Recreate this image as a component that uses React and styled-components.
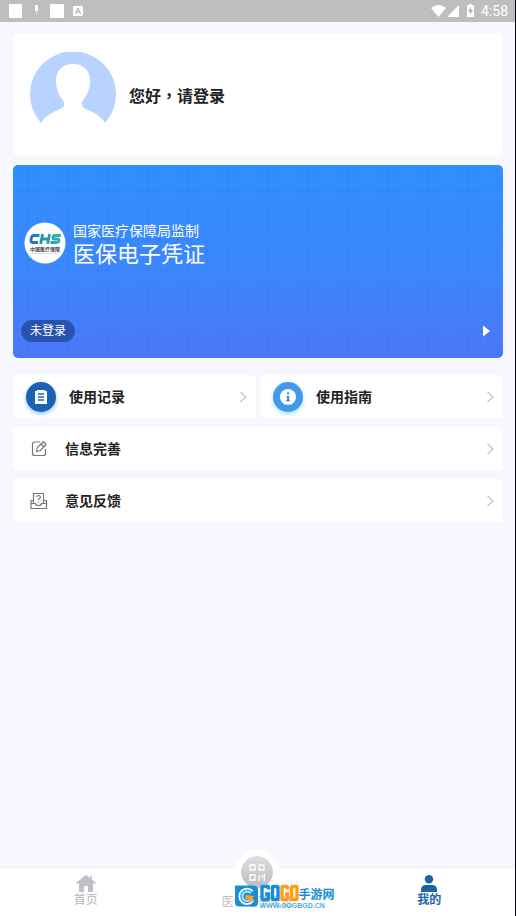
import React from "react";
import styled, { createGlobalStyle } from "styled-components";

const GlobalStyle = createGlobalStyle`
  *, *::before, *::after { box-sizing: border-box; }
  body {
    margin: 0;
    background: #f6f7ff;
    color: #222;
    font-family: Roboto, "Noto Sans CJK SC", sans-serif;
  }
  button { font: inherit; color: inherit; border: 0; padding: 0; background: none; cursor: pointer; }
  svg { display: block; flex: none; }
`;

const Screen = styled.div`
  display: flex;
  flex-direction: column;
  min-height: 100vh;
  border-right: 1px solid #05070c;
`;

const StatusBar = styled.header`
  display: flex;
  align-items: center;
  justify-content: space-between;
  height: 22px;
  padding: 0 7px 0 8px;
  background: #bebebe;
  color: #fff;
`;

const StatusGroup = styled.div`
  display: flex;
  align-items: center;
  gap: 5px;
`;

const Clock = styled.time`
  font-size: 14px;
  line-height: 20px;
`;

const Content = styled.main`
  flex: 1;
  display: flex;
  flex-direction: column;
  gap: 9px;
  padding: 12px 12px 24px 13px;
`;

const Profile = styled.section`
  display: flex;
  align-items: flex-start;
  gap: 13px;
  height: 122px;
  padding: 18px 17px;
  border-radius: 5px;
  background: #fff;
`;

const Greeting = styled.h1`
  margin: 0;
  font-size: 16px;
  line-height: 86px;
  font-weight: 700;
`;

const Comma = styled.span`
  font-family: "Noto Sans CJK TC", sans-serif;
`;

const InsuranceCard = styled.section`
  display: flex;
  flex-direction: column;
  justify-content: space-between;
  height: 193px;
  margin-bottom: 8px;
  padding: 54px 12px 16px 8px;
  border-radius: 5px;
  color: #fff;
  background:
    radial-gradient(circle, rgba(30, 90, 225, 0.3) 0, transparent 2px) 0 0 / 10px 10px,
    linear-gradient(#318fff, #3b87fd 50%, #4b78f8);
`;

const CardBrand = styled.div`
  display: flex;
  align-items: center;
  gap: 7px;
  padding-left: 3px;
`;

const Issuer = styled.p`
  margin: 0;
  font-size: 14px;
  line-height: 24px;
`;

const CardTitle = styled.h2`
  margin: 0;
  font-size: 22px;
  line-height: 24px;
  font-weight: 400;
`;

const CardFooter = styled.div`
  display: flex;
  align-items: center;
  justify-content: space-between;
`;

const StatusPill = styled.span`
  padding: 0 9px;
  border-radius: 11px;
  background: #2a53ad;
  font-size: 12px;
  line-height: 22px;
`;

const Shortcuts = styled.div`
  display: grid;
  grid-template-columns: 1fr 1fr;
  gap: 4px;
`;

const MenuButton = styled.button`
  display: flex;
  align-items: center;
  gap: ${(p) => (p.$wide ? 16 : 13)}px;
  width: 100%;
  height: 43px;
  padding: 0 8px 0 ${(p) => (p.$wide ? 16 : 13)}px;
  border-radius: 4px;
  background: #fff;
  text-align: left;
`;

const MenuLabel = styled.span`
  flex: 1;
  font-size: 14px;
  line-height: 20px;
  font-weight: 700;
`;

const RoundIcon = styled.span`
  display: grid;
  place-items: center;
  width: 30px;
  height: 30px;
  border-radius: 50%;
  background: ${(p) => p.$color};
  box-shadow: 0 2px 4px ${(p) => p.$glow};
`;

const TabBar = styled.nav`
  position: relative;
  display: grid;
  grid-template-columns: repeat(3, 1fr);
  height: 49px;
  border-top: 1px solid #f0f1f6;
  background: #fff;
`;

const Tab = styled.button`
  display: flex;
  flex-direction: column;
  align-items: center;
  justify-content: flex-end;
  padding-bottom: 8px;
  color: ${(p) => (p.$active ? "#1d62af" : "#bfc0c8")};
  font-size: 12px;
  line-height: 16px;
  font-weight: ${(p) => (p.$active ? 700 : 500)};
`;

const ScanTab = styled(Tab)`
  padding-bottom: 6px;
  font-weight: 400;
`;

const ScanCircle = styled.span`
  display: grid;
  place-items: center;
  width: 44px;
  height: 44px;
  margin-top: -24px;
  border: 6px solid #fff;
  border-radius: 50%;
  background: linear-gradient(#dedee0, #bdbdc0) padding-box, #fff border-box;
`;

const Watermark = styled.div`
  position: absolute;
  left: 50%;
  bottom: 7px;
  display: flex;
  align-items: center;
  gap: 2px;
  margin-left: -23px;
  pointer-events: none;
`;

const SiteName = styled.div`
  display: flex;
  align-items: center;
  height: 20px;
  color: #168ed8;
  font-family: "Liberation Sans", "Noto Sans CJK SC", sans-serif;
  font-size: 12px;
  font-weight: 700;
`;

const SiteUrl = styled.div`
  color: #4daee4;
  font-family: "Liberation Sans", sans-serif;
  font-size: 7px;
  line-height: 6px;
  font-weight: 700;
`;

const Brand = styled.svg`
  font-family: "Liberation Sans", "Noto Sans CJK SC", sans-serif;
  font-weight: 500;
`;

function NotificationIcons() {
  return (
    <svg width="76" height="18" viewBox="0 0 76 18" fill="#fff" aria-hidden="true">
      <path d="M1 2h13v14H1zM42 2h14v14H42zM27 3h3v6h-3z" />
      <path d="M28 9h1v3h-1z" opacity=".6" />
      <rect x="65" y="4" width="10" height="10" rx="1" />
      <path d="m67.5 12 2.5-6 2.5 6m-4-2h3" fill="none" stroke="#aaa" strokeWidth="1" />
    </svg>
  );
}

function SignalIcons() {
  return (
    <svg width="45" height="18" viewBox="0 0 45 18" fill="#fff" aria-hidden="true">
      <path d="M0 6Q7.500 0 15 6L7.500 15zM28 3v12H16z" />
      <path d="M36 3h2V2h3v1h2v12h-7z" />
      <path d="m40 5-3 4.500h2.500L39 13l3-5h-2z" fill="#aaa" />
    </svg>
  );
}

function Avatar() {
  return (
    <svg width="86" height="86" viewBox="0 0 86 86" role="img" aria-label="头像">
      <path
        fill="#b8d3ff"
        d="M11 71A43 43 0 1 1 75 71C71 64 63 60 56 57C51 55 51 51 54 47C58 42 60 36 60 29C60 18 53 12 43 12S26 18 26 29C26 36 28 42 32 47C36 52 35 55 30 57C23 60 15 64 11 71Z"
      />
    </svg>
  );
}

function ChsLogo() {
  return (
    <Brand width="42" height="42" viewBox="0 0 42 42" role="img" aria-label="CHS 中国医疗保障">
      <defs>
        <linearGradient id="chs" gradientUnits="userSpaceOnUse" x1="5" y1="0" x2="37" y2="0">
          <stop stopColor="#1b75a9" />
          <stop offset="1" stopColor="#31b6b3" />
        </linearGradient>
      </defs>
      <circle cx="21" cy="21" r="20.5" fill="#fff" />
      <g fill="none" stroke="url(#chs)" strokeWidth="2.800">
        <path d="M15.500 13.500H9.500Q8 13.500 7.600 15L7 18.500Q6.800 20.500 8.500 20.500H14" />
        <path d="M18.600 12 16.600 22M25.600 12 23.600 22M17.500 17h7" />
        <path d="M37 13.500h-6q-1.700 0-2 1.700t1.500 1.800h3q1.700 0 1.500 1.700t-2 1.800h-6.500" />
      </g>
      <text x="21" y="29" textAnchor="middle" fontSize="5" fill="#222">中国医疗保障</text>
      <path d="M8 31.500h26" stroke="#c9d3da" strokeWidth=".7" />
    </Brand>
  );
}

function Chevron() {
  return (
    <svg width="9" height="12" viewBox="0 0 9 12" fill="none" stroke="#c2c2c6" strokeWidth="1.200" aria-hidden="true">
      <path d="m1.500 1 5.500 5-5.500 5" />
    </svg>
  );
}

function RecordsIcon() {
  return (
    <RoundIcon $color="#1d61b5" $glow="#8fc5fa">
      <svg width="14" height="16" viewBox="0 0 14 16" aria-hidden="true">
        <path d="M1 2h2V1h8v1h2v13H1z" fill="#fff" />
        <path d="M4 5h6M4 8h6M4 11h6" stroke="#1d61b5" strokeWidth="1.300" />
      </svg>
    </RoundIcon>
  );
}

function GuideIcon() {
  return (
    <RoundIcon $color="#3f9aeb" $glow="#a5dafd">
      <svg width="16" height="16" viewBox="0 0 16 16" aria-hidden="true">
        <circle cx="8" cy="8" r="8" fill="#fff" />
        <path d="M7 3.500h2.200v2H7zM6.500 7h2.700v4h.8v1.300H6V11h1V8h-.5z" fill="#3f8edb" />
      </svg>
    </RoundIcon>
  );
}

function EditIcon() {
  return (
    <svg width="20" height="18" viewBox="0 0 20 18" fill="none" stroke="#777" strokeWidth="1.200" aria-hidden="true">
      <path d="M11 2H5.500Q3.500 2 3.500 4v9.500q0 2 2 2h9q2 0 2-2V9" />
      <path d="m7.500 11.500.8-4 5-5q1-1 2 0l1 1q1 1 0 2l-5 5zM12 4l3 3" />
    </svg>
  );
}

function FeedbackIcon() {
  return (
    <svg width="20" height="18" viewBox="0 0 20 18" fill="none" stroke="#777" strokeWidth="1.200" aria-hidden="true">
      <path d="M4.500 11V1.500h10V11M4.500 8.500H2v8h15.500v-8h-3M2 11.500h4.500q0 2 3 2t3-2h5" />
      <path d="M7.500 5Q8 3.500 9.500 3.500T11.500 5q0 1-1 1.500T9.500 8M9.500 9.500v1" />
    </svg>
  );
}

function HomeIcon() {
  return (
    <svg width="20" height="17" viewBox="0 0 20 17" fill="currentColor" aria-hidden="true">
      <path d="M0 8 9 .5q1-.7 2 0l3 2.500V1h2v3.700L20 8l-1 1-2-1v9h-5v-6H8v6H3V8L1 9z" />
    </svg>
  );
}

function PersonIcon() {
  return (
    <svg width="18" height="17" viewBox="0 0 18 17" fill="currentColor" aria-hidden="true">
      <circle cx="9" cy="4.200" r="4.200" />
      <path d="M1 17v-2q0-5 5-5h6q5 0 5 5v2z" />
    </svg>
  );
}

function ScanIcon() {
  return (
    <svg width="16" height="17" viewBox="0 0 16 17" fill="none" stroke="#fff" strokeWidth="1.300" aria-hidden="true">
      <path d="M1 1h5v5H1zM10 1h5v5h-5zM1 11h5v5H1zM10 17v-6M13 11v3M15.300 10v7" />
    </svg>
  );
}

function SwirlLogo() {
  return (
    <svg width="23" height="24" viewBox="0 0 24 24" fill="none" aria-hidden="true">
      <path d="M0 1h19q5 0 5 5v13q0 4-4 4H5q-5 0-5-5z" fill="#168fd8" />
      <path d="M18.500 7A8 8 0 1 0 19 17" stroke="#fff" strokeWidth="2" />
      <path d="M16.500 9A5 5 0 1 0 16 16" stroke="#b6e5fa" strokeWidth="2" />
      <path d="m11 11 9 1-1.500 2 1.500 3-3 1-2-3-4 .5z" fill="#ffa21c" />
    </svg>
  );
}

function GogoWordmark() {
  return (
    <Brand width="39" height="20" viewBox="0 0 39 20" fill="none" strokeWidth="3.400" role="img" aria-label="GOGO">
      <g stroke="#178fd8">
        <path d="M8.500 6.500V4.500q0-1-1-1H3q-1 0-1 1v11q0 1 1 1h4.500q1 0 1-1V11H5" />
        <rect x="12.500" y="3.500" width="5.500" height="13" rx="1" />
      </g>
      <g stroke="#ff9d16">
        <path d="M27.500 6.500V4.500q0-1-1-1H23q-1 0-1 1v11q0 1 1 1h3.500q1 0 1-1V11H25" />
        <rect x="31.500" y="3.500" width="5.500" height="13" rx="1" />
      </g>
    </Brand>
  );
}

const rows = [
  { label: "信息完善", Icon: EditIcon },
  { label: "意见反馈", Icon: FeedbackIcon },
];

const shortcuts = [
  { label: "使用记录", Icon: RecordsIcon },
  { label: "使用指南", Icon: GuideIcon },
];

function MenuItem({ label, Icon, wide }) {
  return (
    <MenuButton type="button" $wide={wide}>
      <Icon />
      <MenuLabel>{label}</MenuLabel>
      <Chevron />
    </MenuButton>
  );
}

export default function App() {
  return (
    <Screen lang="zh-CN">
      <GlobalStyle />
      <StatusBar>
        <NotificationIcons />
        <StatusGroup>
          <SignalIcons />
          <Clock>4:58</Clock>
        </StatusGroup>
      </StatusBar>
      <Content>
        <Profile>
          <Avatar />
          <Greeting>
            您好<Comma lang="zh-TW">，</Comma>请登录
          </Greeting>
        </Profile>
        <InsuranceCard>
          <CardBrand>
            <ChsLogo />
            <div>
              <Issuer>国家医疗保障局监制</Issuer>
              <CardTitle>医保电子凭证</CardTitle>
            </div>
          </CardBrand>
          <CardFooter>
            <StatusPill>未登录</StatusPill>
            <svg width="9" height="12" viewBox="0 0 9 12" fill="#fff" aria-hidden="true">
              <path d="M1 .5 8 6l-7 5.500z" />
            </svg>
          </CardFooter>
        </InsuranceCard>
        <Shortcuts>
          {shortcuts.map((item) => (
            <MenuItem key={item.label} {...item} />
          ))}
        </Shortcuts>
        {rows.map((item) => (
          <MenuItem key={item.label} {...item} wide />
        ))}
      </Content>
      <TabBar>
        <Tab type="button">
          <HomeIcon />
          首页
        </Tab>
        <ScanTab type="button">
          <ScanCircle>
            <ScanIcon />
          </ScanCircle>
          医保电子凭证
        </ScanTab>
        <Tab type="button" $active aria-current="page">
          <PersonIcon />
          我的
        </Tab>
        <Watermark>
          <SwirlLogo />
          <div>
            <SiteName>
              <GogoWordmark />
              手游网
            </SiteName>
            <SiteUrl>WWW.GOGBGD.CN</SiteUrl>
          </div>
        </Watermark>
      </TabBar>
    </Screen>
  );
}
